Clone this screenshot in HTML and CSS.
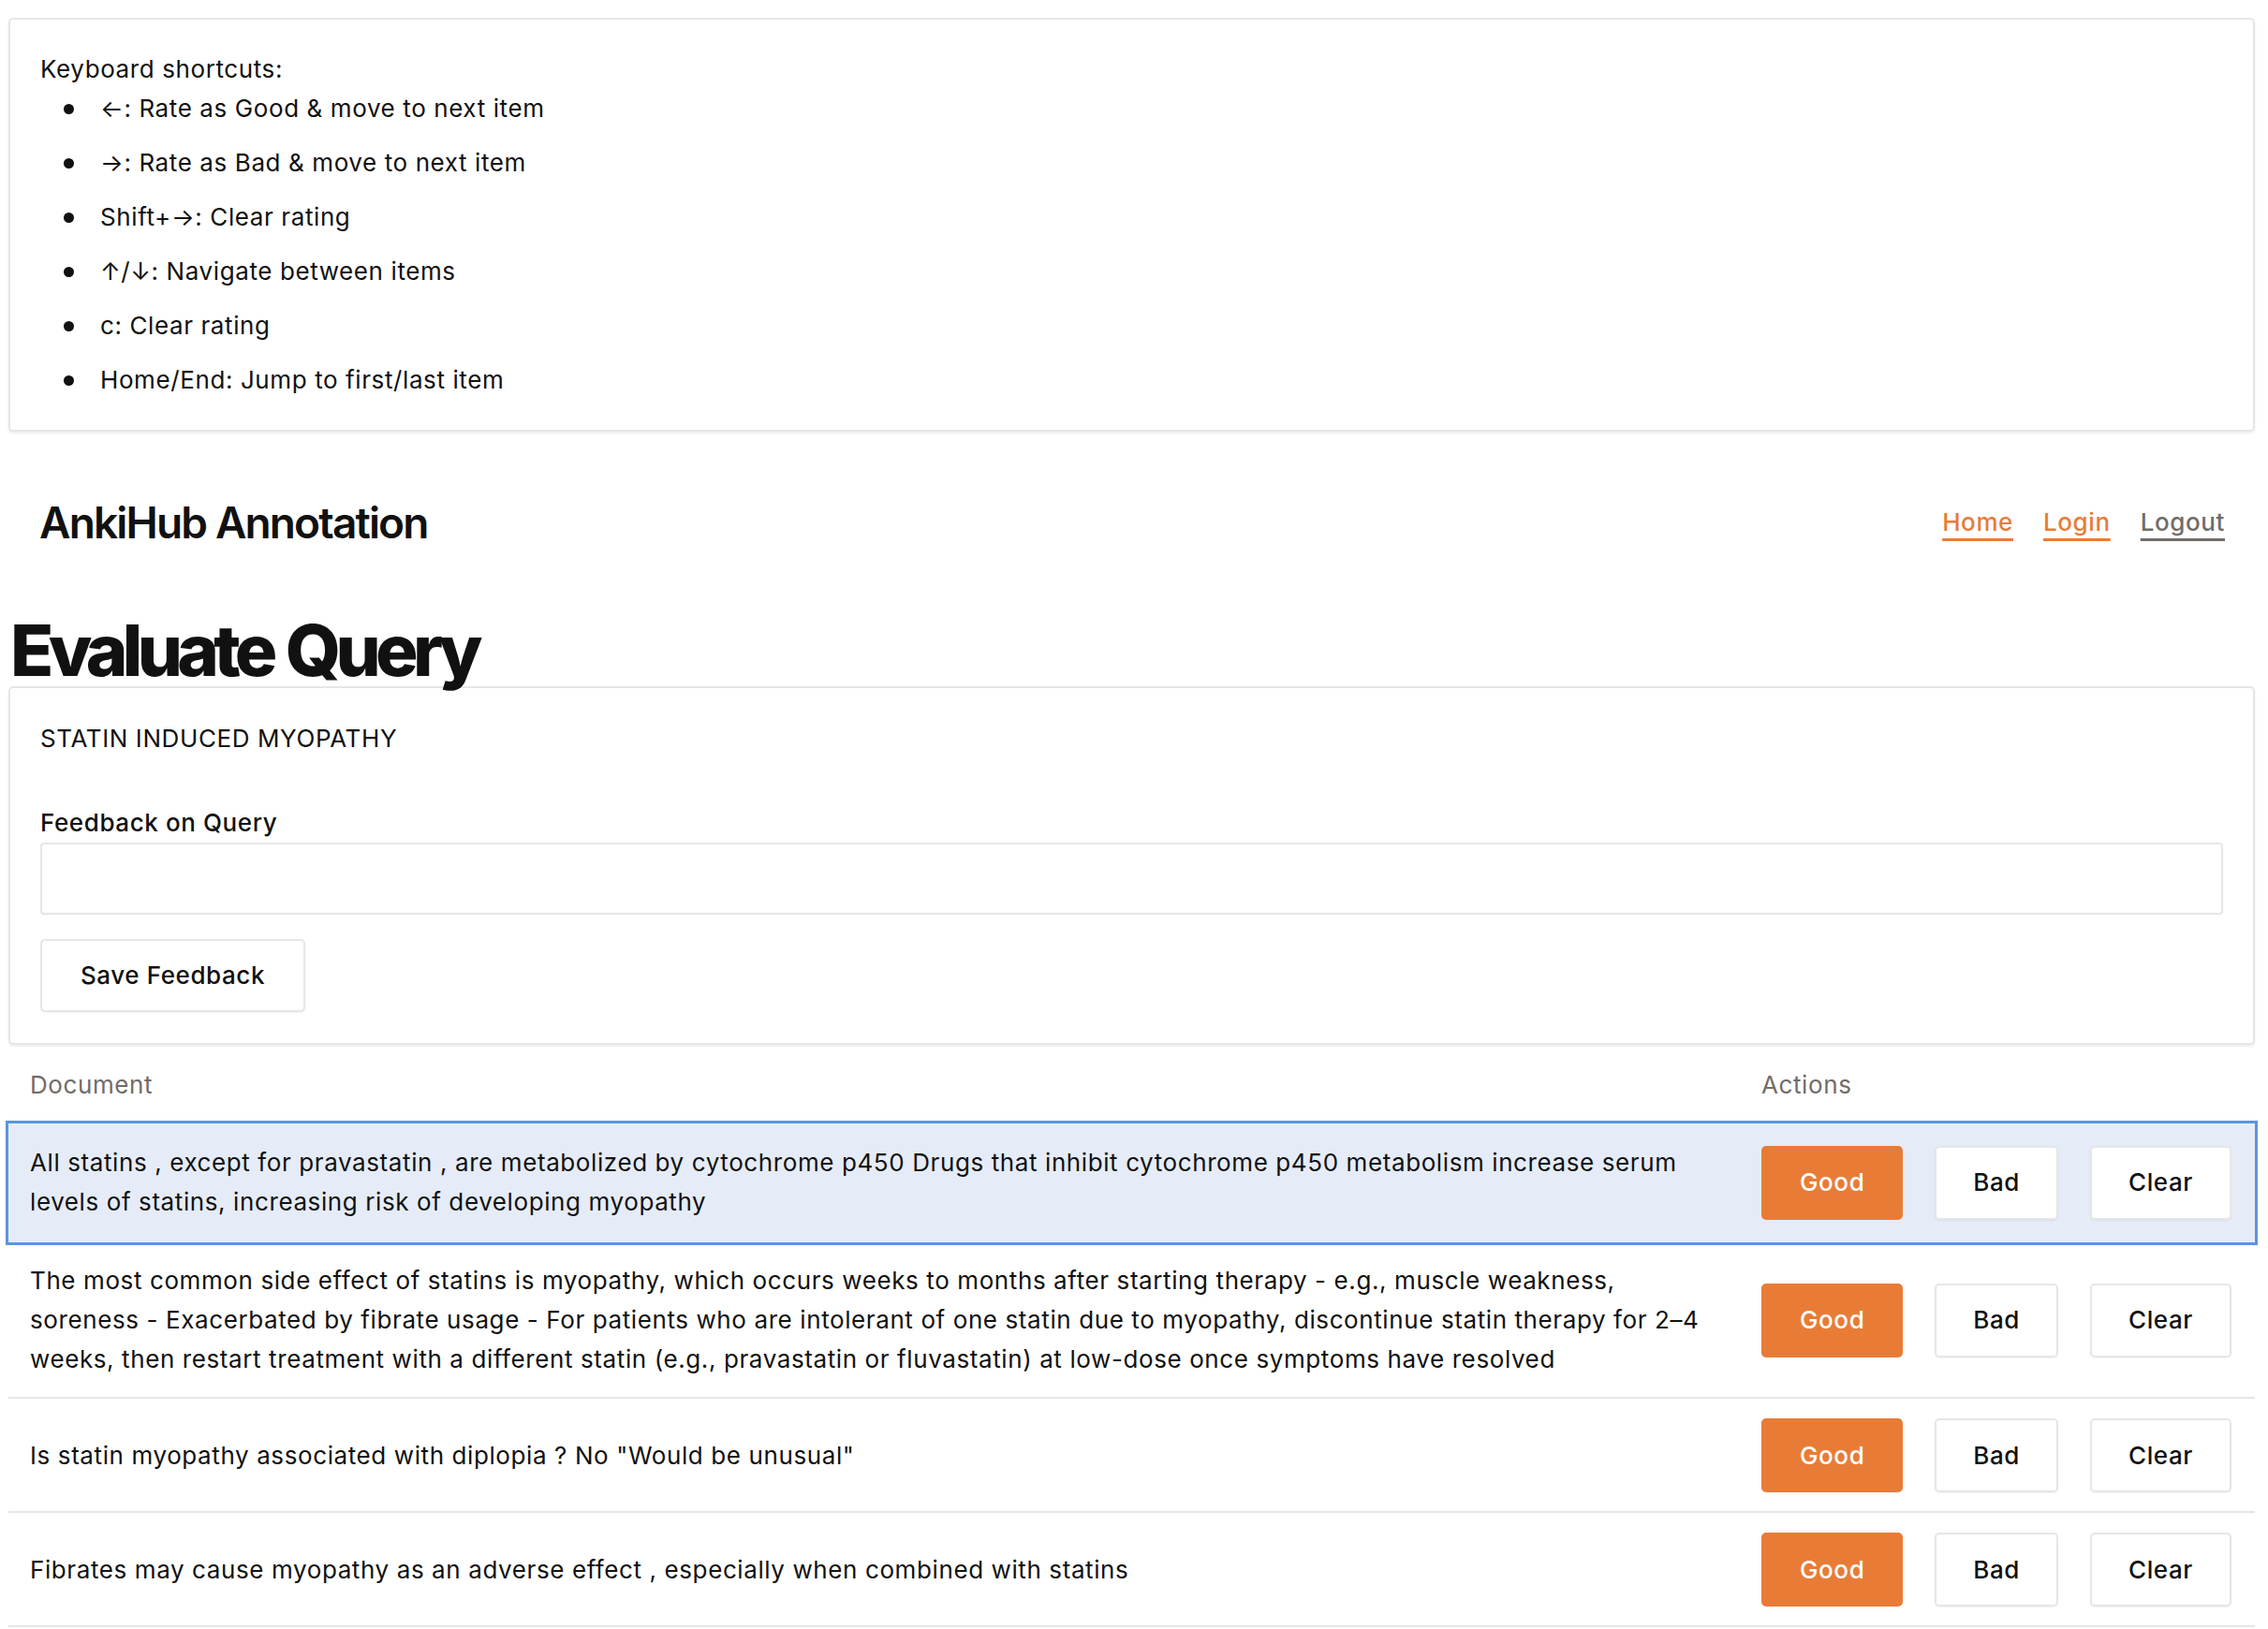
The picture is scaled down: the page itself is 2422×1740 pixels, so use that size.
FILE: index.html
```html
<!DOCTYPE html>
<html lang="en">
<head>
<meta charset="utf-8">
<title>Evaluate Query</title>
<link rel="stylesheet" href="styles.css">
</head>
<body>
<div class="page">
  <section class="card shortcuts">
    <div>Keyboard shortcuts:</div>
    <ul class="shortcut-list">
      <li>←: Rate as Good &amp; move to next item</li>
      <li>→: Rate as Bad &amp; move to next item</li>
      <li>Shift+→: Clear rating</li>
      <li>↑/↓: Navigate between items</li>
      <li>c: Clear rating</li>
      <li>Home/End: Jump to first/last item</li>
    </ul>
  </section>

  <header class="site-header">
    <div class="brand">AnkiHub Annotation</div>
    <nav class="nav">
      <a href="#" class="nav-link">Home</a>
      <a href="#" class="nav-link">Login</a>
      <a href="#" class="nav-link muted">Logout</a>
    </nav>
  </header>

  <h1 class="page-title">Evaluate Query</h1>

  <section class="card query-card">
    <div class="query-text">STATIN INDUCED MYOPATHY</div>
    <label class="field-label" for="fb">Feedback on Query</label>
    <input id="fb" class="text-input" type="text">
    <button class="btn btn-plain save-btn">Save Feedback</button>
  </section>

  <div class="doc-table">
    <div class="doc-row head">
      <div class="cell doc-cell">Document</div>
      <div class="cell act-cell">Actions</div>
    </div>
    <div class="doc-row item selected">
      <div class="cell doc-cell">All statins , except for pravastatin , are metabolized by cytochrome p450 Drugs that inhibit cytochrome p450 metabolism increase serum levels of statins, increasing risk of developing myopathy</div>
      <div class="cell act-cell actions">
        <button class="btn btn-good">Good</button>
        <button class="btn btn-plain">Bad</button>
        <button class="btn btn-plain">Clear</button>
      </div>
    </div>
    <div class="doc-row item">
      <div class="cell doc-cell">The most common side effect of statins is myopathy, which occurs weeks to months after starting therapy - e.g., muscle weakness, soreness - Exacerbated by fibrate usage - For patients who are intolerant of one statin due to myopathy, discontinue statin therapy for 2–4 weeks, then restart treatment with a different statin (e.g., pravastatin or fluvastatin) at low-dose once symptoms have resolved</div>
      <div class="cell act-cell actions">
        <button class="btn btn-good">Good</button>
        <button class="btn btn-plain">Bad</button>
        <button class="btn btn-plain">Clear</button>
      </div>
    </div>
    <div class="doc-row item">
      <div class="cell doc-cell">Is statin myopathy associated with diplopia ? No "Would be unusual"</div>
      <div class="cell act-cell actions">
        <button class="btn btn-good">Good</button>
        <button class="btn btn-plain">Bad</button>
        <button class="btn btn-plain">Clear</button>
      </div>
    </div>
    <div class="doc-row item">
      <div class="cell doc-cell">Fibrates may cause myopathy as an adverse effect , especially when combined with statins</div>
      <div class="cell act-cell actions">
        <button class="btn btn-good">Good</button>
        <button class="btn btn-plain">Bad</button>
        <button class="btn btn-plain">Clear</button>
      </div>
    </div>
  </div>
</div>
</body>
</html>
```

FILE: styles.css
```css
* { box-sizing: border-box; }

html, body {
  margin: 0;
  padding: 0;
  background: #ffffff;
}

body {
  font-family: Inter, "Noto Sans", "Liberation Sans", sans-serif;
  font-size: 26px;
  line-height: 42px;
  letter-spacing: 0.6px;
  color: #111111;
}

.page {
  margin: 19px 14px 0 9px;
}

.card {
  border: 2px solid #e6e6e6;
  border-radius: 5px;
  background: #ffffff;
  box-shadow: 0 2px 3px rgba(0, 0, 0, 0.07);
}

.shortcuts {
  padding: 32px 32px 32px 32px;
}

.shortcut-list {
  margin: 0;
  padding-left: 64px;
  list-style: none;
}

.shortcut-list li {
  display: flex;
  align-items: center;
}

.shortcut-list li::before {
  content: "";
  flex: none;
  width: 11px;
  height: 11px;
  border-radius: 50%;
  background: #111111;
  margin-left: -39px;
  margin-right: 28px;
}

.shortcut-list li + li {
  margin-top: 16px;
}

.site-header {
  height: 194px;
  display: flex;
  align-items: center;
  justify-content: space-between;
  padding: 0 32px 0 33px;
}

.brand {
  font-size: 46px;
  font-weight: 600;
  letter-spacing: -0.04em;
  color: #111111;
}

.nav {
  display: flex;
  gap: 32px;
}

.nav-link {
  color: #e87c37;
  font-weight: 500;
  text-decoration: underline;
  text-decoration-thickness: 3px;
  text-underline-offset: 8px;
}

.nav-link.muted {
  color: #716c68;
}

.page-title {
  margin: 0;
  font-size: 76px;
  line-height: 78px;
  font-weight: 800;
  letter-spacing: -0.075em;
  word-spacing: 0.04em;
  padding-left: 2px;
  color: #111111;
}

.query-card {
  padding: 33px 32px 33px 32px;
  display: flex;
  flex-direction: column;
  align-items: flex-start;
}

.query-text {
  margin-bottom: 48px;
}

.field-label {
  font-weight: 500;
  line-height: 42px;
}

.text-input {
  width: 100%;
  height: 77px;
  border: 2px solid #e6e6e6;
  border-radius: 4px;
  background: #ffffff;
  font: inherit;
  margin: 0 0 26px 0;
  box-shadow: 0 1px 2px rgba(0, 0, 0, 0.04);
}

.btn {
  font-family: inherit;
  font-size: 26px;
  font-weight: 500;
  line-height: 42px;
  letter-spacing: inherit;
  height: 79px;
  border-radius: 5px;
  cursor: pointer;
}

.btn-plain {
  background: #ffffff;
  color: #111111;
  border: 2px solid #e6e6e6;
  padding: 0 39px;
  box-shadow: 0 1px 2px rgba(0, 0, 0, 0.06);
}

.save-btn {
  height: 78px;
  width: 283px;
  padding: 0;
}

.btn-good {
  background: #e87c37;
  color: #ffffff;
  border: 2px solid #e87c37;
  padding: 0 39px;
}

.doc-table {
  display: flex;
  flex-direction: column;
}

.doc-row {
  display: grid;
  grid-template-columns: 1fr 548px;
  align-items: center;
}

.doc-row.head {
  color: #716c68;
}

.doc-row.head .cell {
  padding-top: 22px;
  padding-bottom: 20px;
}

.doc-row.item {
  border-bottom: 2px solid #e6e6e6;
}

.doc-row.item.selected {
  background: #e5ecf7;
  outline: 3px solid #5b95d9;
  border-bottom-color: transparent;
}

.cell {
  padding: 20px 23px 19px 23px;
}

.act-cell {
  padding: 21px 20px 20px 21px;
}

.doc-row.selected .cell {
  padding-top: 21px;
  padding-bottom: 20px;
}

.actions {
  display: flex;
  gap: 34px;
  align-items: center;
}
```
